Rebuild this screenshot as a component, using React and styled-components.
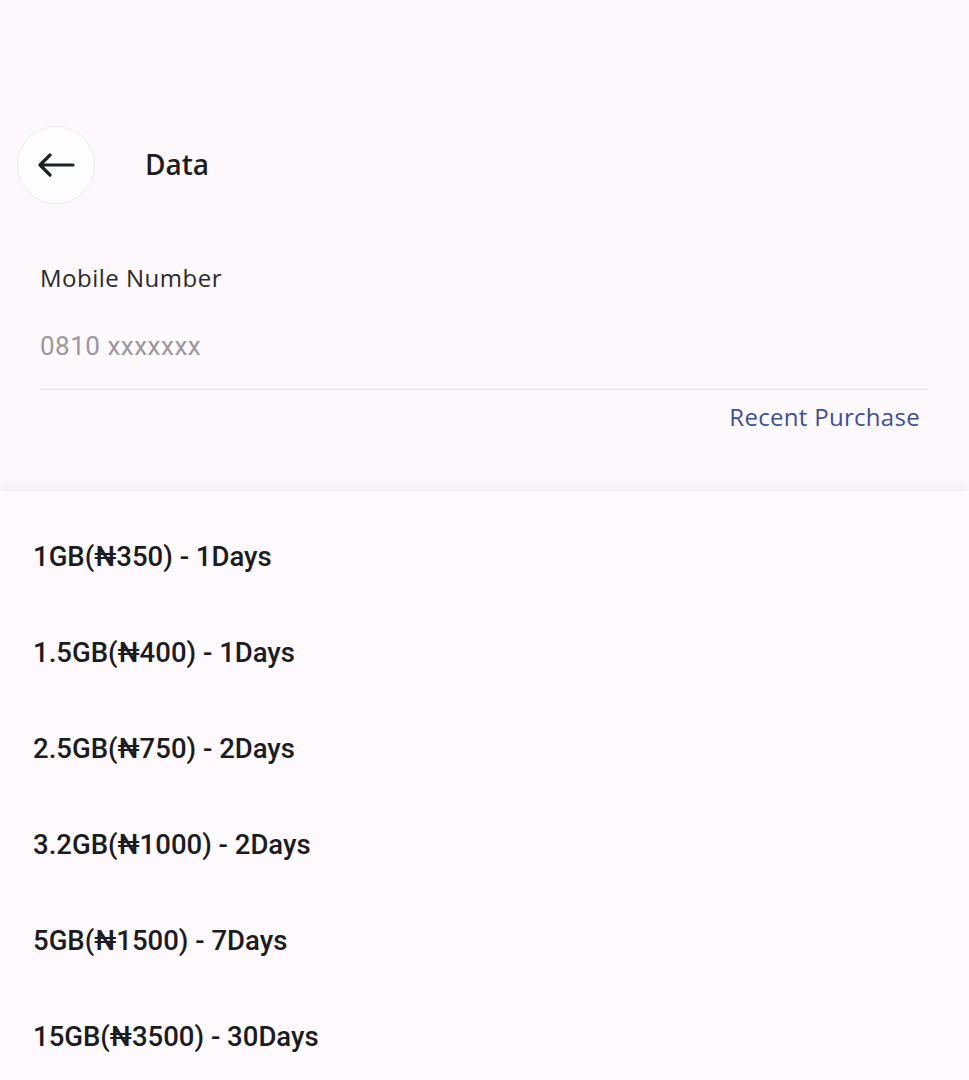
import React from 'react';
import styled, { createGlobalStyle } from 'styled-components';

const GlobalStyle = createGlobalStyle`
  html, body {
    margin: 0;
    padding: 0;
    background: #fcf8fc;
  }
  * { box-sizing: border-box; }
`;

const Page = styled.div`
  min-height: 100vh;
  width: 969px;
  background: #fcf8fc;
  display: flex;
  flex-direction: column;
  overflow: hidden;
`;

const Header = styled.div`
  display: flex;
  align-items: center;
  padding: 126px 0 0 17px;
`;

const BackButton = styled.button`
  width: 78px;
  height: 78px;
  border-radius: 50%;
  border: 1px solid #efedef;
  background: #fefdfe;
  display: flex;
  align-items: center;
  justify-content: center;
  padding: 0;
  cursor: pointer;
`;

const Title = styled.h1`
  margin: -2px 0 0 50px;
  font-family: "Open Sans", "Liberation Sans", sans-serif;
  font-size: 28px;
  font-weight: 600;
  color: #1c1b1f;
`;

const Form = styled.div`
  padding: 0 41px 0 40px;
  display: flex;
  flex-direction: column;
`;

const Label = styled.label`
  margin-top: 59px;
  font-family: "Open Sans", "Liberation Sans", sans-serif;
  font-size: 24px;
  line-height: 30px;
  font-weight: 400;
  letter-spacing: 0.5px;
  color: #2b2a2e;
`;

const Input = styled.input`
  margin-top: 38px;
  border: none;
  border-bottom: 1.5px solid #e2dfe3;
  background: transparent;
  padding: 0 0 28px 0;
  font-family: Roboto, "Liberation Sans", sans-serif;
  font-size: 26px;
  line-height: 30px;
  letter-spacing: 0.5px;
  color: #1c1b1f;
  outline: none;
  &::placeholder {
    color: #9a989c;
  }
`;

const RecentLink = styled.a`
  align-self: flex-end;
  margin: 12px 8px 0 0;
  font-family: "Open Sans", "Liberation Sans", sans-serif;
  font-size: 24px;
  line-height: 30px;
  letter-spacing: 0.3px;
  color: #3f5094;
  text-decoration: none;
`;

const Sheet = styled.div`
  margin-top: 59px;
  flex: 1;
  background: #fdf9fd;
  box-shadow: 0 -6px 10px rgba(90, 60, 80, 0.05);
  padding-top: 17px;
`;

const Option = styled.div`
  height: 96px;
  display: flex;
  align-items: center;
  padding-left: 33px;
  font-family: Roboto, "Liberation Sans", sans-serif;
  font-size: 27.5px;
  font-weight: 500;
  color: #1c1b1f;
`;

const plans = [
  '1GB(₦350) - 1Days',
  '1.5GB(₦400) - 1Days',
  '2.5GB(₦750) - 2Days',
  '3.2GB(₦1000) - 2Days',
  '5GB(₦1500) - 7Days',
  '15GB(₦3500) - 30Days',
];

function ArrowLeft() {
  return (
    <svg width="38" height="24" viewBox="0 0 38 24" fill="none">
      <path
        d="M36 12H3M13 2L3 12l10 10"
        stroke="#1f2323"
        strokeWidth="3.2"
        strokeLinecap="round"
        strokeLinejoin="round"
      />
    </svg>
  );
}

export default function App() {
  return (
    <>
      <GlobalStyle />
      <Page>
        <Header>
          <BackButton aria-label="Back">
            <ArrowLeft />
          </BackButton>
          <Title>Data</Title>
        </Header>

        <Form>
          <Label htmlFor="mobile">Mobile Number</Label>
          <Input id="mobile" placeholder="0810 xxxxxxx" />
          <RecentLink href="#">Recent Purchase</RecentLink>
        </Form>

        <Sheet>
          {plans.map((p) => (
            <Option key={p}>{p}</Option>
          ))}
        </Sheet>
      </Page>
    </>
  );
}
